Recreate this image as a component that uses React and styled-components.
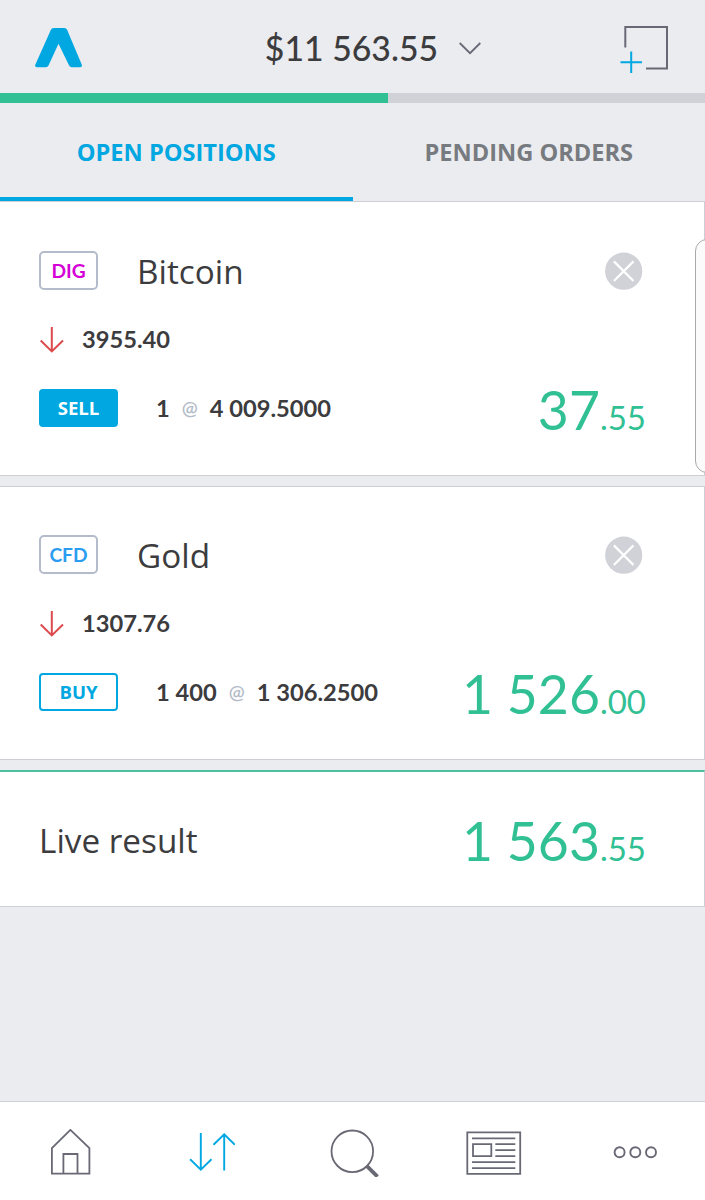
import React, { useState } from 'react';
import styled, { ThemeProvider, createGlobalStyle } from 'styled-components';

const theme = {
  color: {
    blue: '#00a7e1',
    green: '#31c093',
    text: '#3c3c3e',
    icon: '#696975',
    muted: '#777b80',
    background: '#ebecf0',
    border: '#cdcfd4',
    track: '#d1d2d7',
  },
  font: {
    text: "'Open Sans', 'Noto Sans', sans-serif",
    number: "Lato, 'Open Sans', sans-serif",
  },
};

const GlobalStyle = createGlobalStyle`
  *,
  *::before,
  *::after {
    box-sizing: border-box;
  }

  body {
    margin: 0;
    background-color: ${props => props.theme.color.background};
  }

  button {
    margin: 0;
    padding: 0;
    border: none;
    background-color: transparent;
    cursor: pointer;
  }

  svg {
    display: block;
  }
`;

const StyledScreen = styled.div`
  position: relative;
  display: flex;
  flex-direction: column;
  width: 705px;
  height: 1200px;
  overflow: hidden;
  color: ${props => props.theme.color.text};
  font-family: ${props => props.theme.font.text};
`;

const StyledHeader = styled.header`
  display: grid;
  grid-template-columns: 1fr auto 1fr;
  align-items: start;
  height: 93px;
  padding: 0 36px 0 35px;
`;

const StyledLogo = styled.div`
  margin-top: 28px;
`;

const StyledBalance = styled.button`
  display: flex;
  align-items: center;
  gap: 21px;
  margin: 27px 0 0 42px;
  color: ${props => props.theme.color.text};
  font-family: ${props => props.theme.font.number};
  font-size: 33.8px;
  font-weight: 500;
  line-height: 42px;
`;

const StyledNewOrder = styled.button`
  justify-self: end;
  margin-top: 26px;
`;

const StyledProgress = styled.div`
  height: 9.6px;
  background-color: ${props => props.theme.color.track};
`;

const StyledProgressFill = styled.div`
  height: 100%;
  background-color: ${props => props.theme.color.green};
`;

const StyledTabs = styled.nav`
  display: flex;
  height: 98.4px;
`;

const StyledTab = styled.button`
  flex: 1;
  padding-top: 4px;
  border-bottom: 4px solid ${props => (props.$active ? props.theme.color.blue : 'transparent')};
  color: ${props => (props.$active ? props.theme.color.blue : props.theme.color.muted)};
  font-family: ${props => props.theme.font.text};
  font-size: 23.6px;
  font-weight: 700;
  line-height: 30px;
`;

const StyledCard = styled.section`
  height: ${props => props.$height}px;
  padding: ${props => props.$top}px 58px 0 39px;
  border: 1px solid ${props => props.theme.color.border};
  border-left: none;
  background-color: #ffffff;

  & + & {
    margin-top: 10px;
  }
`;

const StyledSummary = styled.section`
  display: flex;
  align-items: center;
  justify-content: space-between;
  height: 137px;
  margin-top: 10px;
  padding: 1px 58px 0 39px;
  border: 1px solid ${props => props.theme.color.border};
  border-top: 2px solid #4fbda0;
  border-left: none;
  background-color: #ffffff;
`;

const StyledRow = styled.div`
  display: flex;
  align-items: center;
  height: 39px;
`;

const StyledPriceRow = styled(StyledRow)`
  height: 28px;
  margin-top: 36px;
`;

const StyledOrderRow = styled(StyledRow)`
  height: 38px;
  margin-top: 35px;
`;

const StyledBadge = styled.span`
  width: 59px;
  height: 39px;
  margin-right: 39px;
  border: 2px solid #b4bccb;
  border-radius: 5px;
  color: ${props => props.$color};
  font-family: ${props => props.theme.font.number};
  font-size: 19.2px;
  font-weight: 700;
  line-height: 35px;
  text-align: center;
`;

const StyledName = styled.h2`
  flex: 1;
  margin: 0;
  padding-top: 1px;
  font-size: 33.3px;
  font-weight: 400;
  line-height: 40px;
`;

const StyledClose = styled.button`
  margin: 2px 3px 0 0;
`;

const StyledNumber = styled.span`
  font-family: ${props => props.theme.font.number};
  font-size: 23.7px;
  font-weight: 700;
  line-height: 28px;
  white-space: pre;
`;

const StyledPrice = styled(StyledNumber)`
  margin: -1px 0 0 18px;
`;

const StyledSide = styled.span`
  width: 79px;
  height: 38px;
  margin-right: 38px;
  border: 2px solid ${props => props.theme.color.blue};
  border-radius: 4px;
  background-color: ${props => (props.$filled ? props.theme.color.blue : '#ffffff')};
  color: ${props => (props.$filled ? '#ffffff' : props.theme.color.blue)};
  font-size: 18.6px;
  font-weight: 700;
  line-height: 34px;
  text-align: center;
`;

const StyledAt = styled.span`
  margin: 0 12px;
  color: #b3bbc8;
  font-family: ${props => props.theme.font.number};
  font-size: 19px;
  font-weight: 600;
`;

const StyledResult = styled.span`
  margin-left: auto;
  padding-top: 10px;
  color: ${props => props.theme.color.green};
  font-family: ${props => props.theme.font.number};
  font-size: 53.5px;
  font-weight: 400;
  line-height: 60px;
  white-space: pre;
`;

const StyledFraction = styled.span`
  font-size: 33px;
`;

const StyledEdgeHandle = styled.div`
  position: absolute;
  top: 239px;
  right: -20px;
  width: 30px;
  height: 234px;
  border: 1px solid #a9aaac;
  border-radius: 12px;
  background-color: #fbfbfb;
`;

const StyledBottomBar = styled.footer`
  display: flex;
  height: 99px;
  margin-top: auto;
  border-top: 1px solid ${props => props.theme.color.border};
  background-color: #ffffff;
`;

const StyledBottomItem = styled.button`
  display: flex;
  flex: 1;
  align-items: center;
  justify-content: center;
  padding-top: 3px;
  color: ${props => (props.$active ? props.theme.color.blue : props.theme.color.icon)};
`;

const Logo = () => (
  <svg width="48" height="40" viewBox="0 0 48 40">
    <path
      d="M18.6 0H29.4Q31.3 0 32.1 1.8L46.6 36.3Q47.9 39.2 45 39.2H36.8Q34.9 39.2 34.1 37.5L23.5 15.8L13.5 37.5Q12.7 39.2 10.8 39.2H2Q-.8 39.2.5 36.3L15.9 1.8Q16.7 0 18.6 0Z"
      fill="#00a7e1"
    />
  </svg>
);

const ChevronIcon = () => (
  <svg width="22" height="13" viewBox="0 0 22 13" fill="none" stroke="#696975" strokeWidth="1.8">
    <path d="M.7 1L11 11.2L21.3 1" />
  </svg>
);

const NewOrderIcon = () => (
  <svg width="49" height="48" viewBox="0 0 49 48" fill="none" strokeWidth="2">
    <path d="M5.3 21.5V1H47V42.5H26" stroke="#696975" />
    <path d="M.5 36.3H22M11.2 25.5V47" stroke="#00a7e1" />
  </svg>
);

const CloseIcon = () => (
  <svg width="38" height="38" viewBox="0 0 38 38">
    <circle cx="18.7" cy="19.2" r="18.6" fill="#d1d2d8" />
    <path d="M8.9 9.4L28.5 29M28.5 9.4L8.9 29" stroke="#ffffff" strokeWidth="2.2" />
  </svg>
);

const DownIcon = () => (
  <svg width="25" height="28" viewBox="0 0 25 28" fill="none" stroke="#dc4a4e" strokeWidth="2">
    <path d="M12.8 1V26M1.7 14.5L12.8 25.4L24 14.5" />
  </svg>
);

const HomeIcon = () => (
  <svg width="40" height="48" viewBox="0 0 40 48" fill="none" stroke="currentColor" strokeWidth="1.8">
    <path d="M.9 44.7V19.2L19.4 .9L38.4 19.2V44.7ZM12.4 44.7V25H26.5V44.7" />
  </svg>
);

const PositionsIcon = () => (
  <svg width="46" height="40" viewBox="0 0 46 40" fill="none" stroke="currentColor" strokeWidth="1.9">
    <path d="M11.8 0V36.6M1.1 26.3L11.8 36.6L22.5 26.3M35.2 37.5V1.3M24.5 11.7L35.2 1.3L45.9 11.7" />
  </svg>
);

const SearchIcon = () => (
  <svg width="52" height="48" viewBox="-2 0 52 48" fill="none" stroke="currentColor">
    <circle cx="23.3" cy="22.3" r="20.8" strokeWidth="1.8" />
    <path d="M37.5 36.7L48.5 47.7" strokeWidth="3.8" />
  </svg>
);

const NewsIcon = () => (
  <svg width="56" height="44" viewBox="0 0 56 44" fill="none" stroke="currentColor" strokeWidth="1.8">
    <path d="M1.3 1.3H54.2V42.8H1.3Z" />
    <path d="M7 13.1H25.3V25.2H7Z" />
    <path d="M6 7.3H49.3M29.3 13.1H49.3M29.3 19.2H49.3M29.3 25.2H49.3M6 31.2H49.3M6 37.2H49.3" />
  </svg>
);

const MoreIcon = () => (
  <svg width="44" height="14" viewBox="0 0 44 14" fill="none" stroke="currentColor" strokeWidth="1.9">
    <circle cx="6.6" cy="6.3" r="5" />
    <circle cx="22.3" cy="6.3" r="5" />
    <circle cx="38" cy="6.3" r="5" />
  </svg>
);

const positions = [
  {
    type: 'DIG', typeColor: '#d500d5', name: 'Bitcoin', price: '3955.40', side: 'SELL',
    amount: '1', open: '4 009.5000', result: ['37', '.55'], height: 275, top: 49,
  },
  {
    type: 'CFD', typeColor: '#2a9df0', name: 'Gold', price: '1307.76', side: 'BUY',
    amount: '1 400', open: '1 306.2500', result: ['1 526', '.00'], height: 274, top: 48,
  },
];

const tabs = ['OPEN POSITIONS', 'PENDING ORDERS'];

const bottomItems = [
  { id: 'home', Icon: HomeIcon },
  { id: 'positions', Icon: PositionsIcon },
  { id: 'search', Icon: SearchIcon },
  { id: 'news', Icon: NewsIcon },
  { id: 'more', Icon: MoreIcon },
];

const Result = ({ value }) => (
  <StyledResult>
    {value[0]}
    <StyledFraction>{value[1]}</StyledFraction>
  </StyledResult>
);

const PositionCard = ({ position }) => (
  <StyledCard $height={position.height} $top={position.top}>
    <StyledRow>
      <StyledBadge $color={position.typeColor}>{position.type}</StyledBadge>
      <StyledName>{position.name}</StyledName>
      <StyledClose type="button"><CloseIcon /></StyledClose>
    </StyledRow>
    <StyledPriceRow>
      <DownIcon />
      <StyledPrice>{position.price}</StyledPrice>
    </StyledPriceRow>
    <StyledOrderRow>
      <StyledSide $filled={position.side === 'SELL'}>{position.side}</StyledSide>
      <StyledNumber>{position.amount}</StyledNumber>
      <StyledAt>@</StyledAt>
      <StyledNumber>{position.open}</StyledNumber>
      <Result value={position.result} />
    </StyledOrderRow>
  </StyledCard>
);

const App = () => {
  const [activeTab, setActiveTab] = useState(tabs[0]);
  const [activeItem, setActiveItem] = useState('positions');

  return (
    <ThemeProvider theme={theme}>
      <GlobalStyle />
      <StyledScreen>
        <StyledHeader>
          <StyledLogo><Logo /></StyledLogo>
          <StyledBalance type="button">
            $11 563.55
            <ChevronIcon />
          </StyledBalance>
          <StyledNewOrder type="button"><NewOrderIcon /></StyledNewOrder>
        </StyledHeader>
        <StyledProgress>
          <StyledProgressFill style={{ width: `${(388 / 705) * 100}%` }} />
        </StyledProgress>
        <StyledTabs>
          {tabs.map(tab => (
            <StyledTab
              key={tab}
              type="button"
              $active={tab === activeTab}
              onClick={() => setActiveTab(tab)}
            >
              {tab}
            </StyledTab>
          ))}
        </StyledTabs>
        {positions.map(position => (
          <PositionCard key={position.name} position={position} />
        ))}
        <StyledSummary>
          <StyledName>Live result</StyledName>
          <Result value={['1 563', '.55']} />
        </StyledSummary>
        <StyledBottomBar>
          {bottomItems.map(({ id, Icon }) => (
            <StyledBottomItem
              key={id}
              type="button"
              $active={id === activeItem}
              onClick={() => setActiveItem(id)}
            >
              <Icon />
            </StyledBottomItem>
          ))}
        </StyledBottomBar>
        <StyledEdgeHandle />
      </StyledScreen>
    </ThemeProvider>
  );
};

export default App;
